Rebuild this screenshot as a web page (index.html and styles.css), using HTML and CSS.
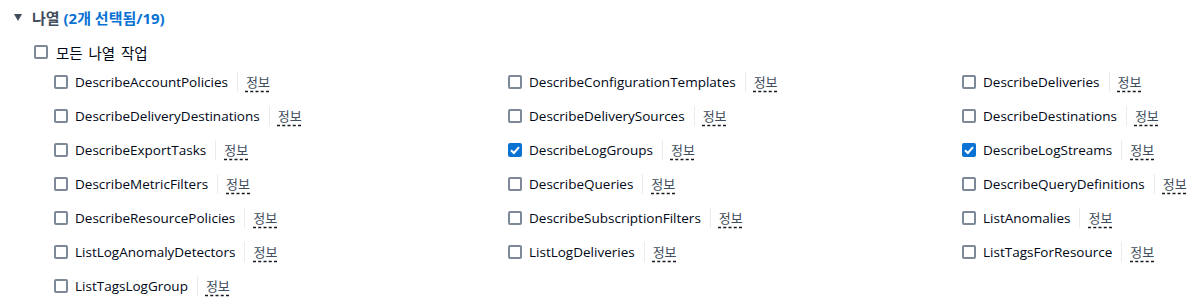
FILE: index.html
```html
<!DOCTYPE html>
<html lang="ko">
<head>
    <meta charset="UTF-8">
    <meta name="viewport" content="width=device-width, initial-scale=1.0">
    <title>나열 작업</title>
    <link rel="stylesheet" href="styles.css">
</head>
<body>
<!-- 나열 섹션 -->
<div class="section">
  <div class="head">
    <span class="caret"></span>
    <span class="head-title">나열 <span class="count">(2개 선택됨/19)</span></span>
  </div>

  <label class="all-row">
    <span class="box"></span>
    <span class="label">모든 나열 작업</span>
  </label>

  <div class="grid">
    <div class="item"><span class="box"></span><span class="label">DescribeAccountPolicies</span><span class="info">정보</span></div>
    <div class="item"><span class="box"></span><span class="label">DescribeConfigurationTemplates</span><span class="info">정보</span></div>
    <div class="item"><span class="box"></span><span class="label">DescribeDeliveries</span><span class="info">정보</span></div>

    <div class="item"><span class="box"></span><span class="label">DescribeDeliveryDestinations</span><span class="info">정보</span></div>
    <div class="item"><span class="box"></span><span class="label">DescribeDeliverySources</span><span class="info">정보</span></div>
    <div class="item"><span class="box"></span><span class="label">DescribeDestinations</span><span class="info">정보</span></div>

    <div class="item"><span class="box"></span><span class="label">DescribeExportTasks</span><span class="info">정보</span></div>
    <div class="item"><span class="box checked"><svg viewBox="0 0 14 14" width="14" height="14"><path d="M3 7.3 L5.9 10 L11 4.2" fill="none" stroke="#fff" stroke-width="2"/></svg></span><span class="label">DescribeLogGroups</span><span class="info">정보</span></div>
    <div class="item"><span class="box checked"><svg viewBox="0 0 14 14" width="14" height="14"><path d="M3 7.3 L5.9 10 L11 4.2" fill="none" stroke="#fff" stroke-width="2"/></svg></span><span class="label">DescribeLogStreams</span><span class="info">정보</span></div>

    <div class="item"><span class="box"></span><span class="label">DescribeMetricFilters</span><span class="info">정보</span></div>
    <div class="item"><span class="box"></span><span class="label">DescribeQueries</span><span class="info">정보</span></div>
    <div class="item"><span class="box"></span><span class="label">DescribeQueryDefinitions</span><span class="info">정보</span></div>

    <div class="item"><span class="box"></span><span class="label">DescribeResourcePolicies</span><span class="info">정보</span></div>
    <div class="item"><span class="box"></span><span class="label">DescribeSubscriptionFilters</span><span class="info">정보</span></div>
    <div class="item"><span class="box"></span><span class="label">ListAnomalies</span><span class="info">정보</span></div>

    <div class="item"><span class="box"></span><span class="label">ListLogAnomalyDetectors</span><span class="info">정보</span></div>
    <div class="item"><span class="box"></span><span class="label">ListLogDeliveries</span><span class="info">정보</span></div>
    <div class="item"><span class="box"></span><span class="label">ListTagsForResource</span><span class="info">정보</span></div>

    <div class="item"><span class="box"></span><span class="label">ListTagsLogGroup</span><span class="info">정보</span></div>
  </div>
</div>
</body>
</html>
```

FILE: styles.css
```css
body {
  margin: 0;
  padding: 0;
  background: #fff;
  color: #000716;
  font-family: "Open Sans", "Noto Sans CJK KR", sans-serif;
  font-size: 14px;
  overflow: hidden;
}

.section {
  padding: 7px 0 0 14px;
}

/* 섹션 제목 */
.head {
  display: flex;
  align-items: center;
  height: 20px;
  gap: 10px;
}

.caret {
  width: 0;
  height: 0;
  border-left: 4.5px solid transparent;
  border-right: 4.5px solid transparent;
  border-top: 7px solid #414d5c;
}

.head-title {
  font-weight: bold;
  font-size: 15px;
  color: #414d5c;
}

.count {
  color: #0972d3;
}

/* 전체 선택 */
.all-row {
  display: flex;
  align-items: center;
  gap: 8px;
  height: 20px;
  margin: 15px 0 0 20px;
}

.all-row .label {
  font-size: 14.5px;
  word-spacing: 2px;
}

/* 체크박스 */
.box {
  box-sizing: border-box;
  width: 14px;
  height: 14px;
  border: 2px solid #7d8998;
  border-radius: 2px;
  flex: none;
  display: flex;
}

.box.checked {
  background: #0972d3;
  border-color: #0972d3;
}

.box.checked svg {
  margin: -2px;
}

/* 작업 목록 */
.grid {
  display: grid;
  grid-template-columns: 454px 454px 1fr;
  grid-auto-rows: 34px;
  margin: 3px 0 0 40px;
}

.item {
  display: flex;
  align-items: center;
  white-space: nowrap;
}

.item .box {
  margin-right: 7px;
}

.item .label {
  font-size: 13.5px;
  padding-right: 9px;
}

.info {
  border-left: 1px solid #e9ebed;
  padding-left: 8px;
  line-height: 20px;
  color: #414d5c;
  font-family: "Noto Sans CJK KR", sans-serif;
  font-weight: 400;
  font-size: 13px;
  text-decoration: underline dashed #16191f;
  text-underline-offset: 4px;
}
```
